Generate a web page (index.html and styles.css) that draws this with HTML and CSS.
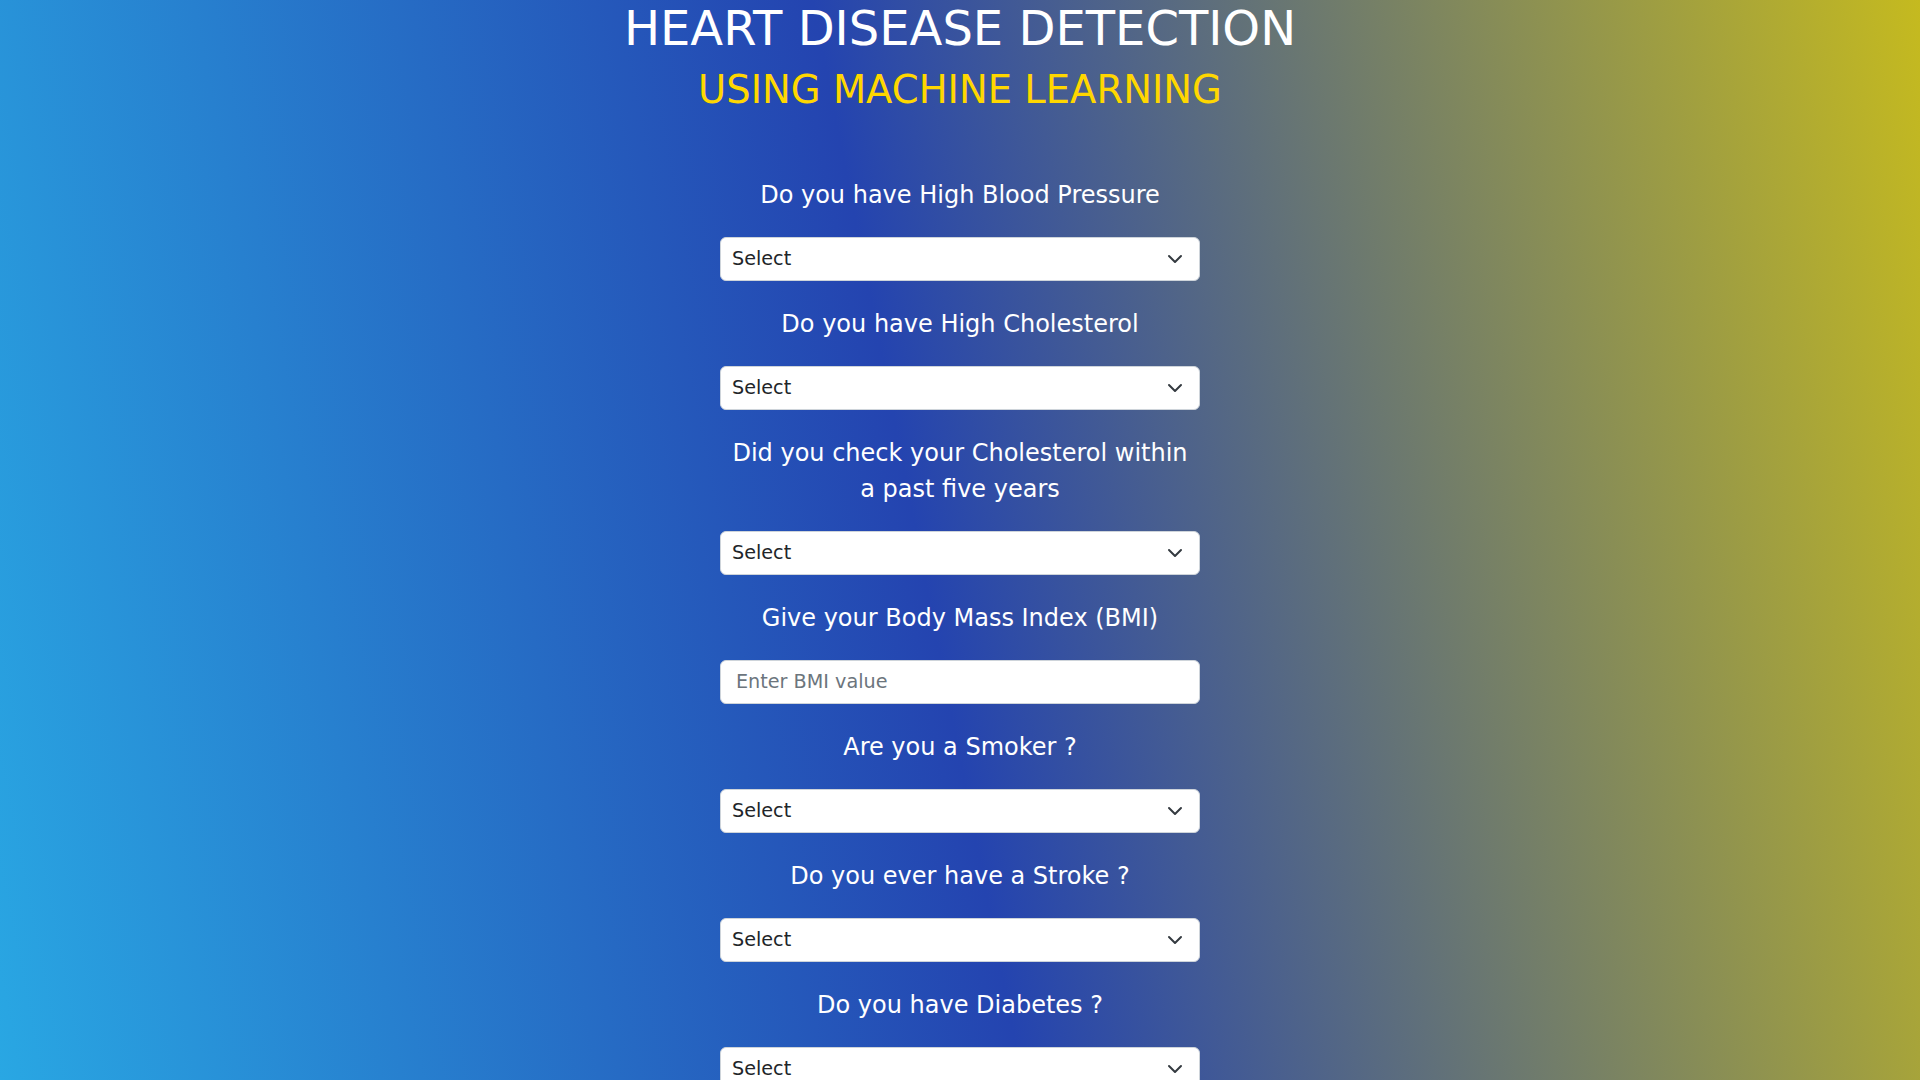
FILE: index.html
```html
<!DOCTYPE html>
<html lang="en">
<head>
<meta charset="utf-8">
<title>Heart Disease Detection</title>
<link rel="stylesheet" href="styles.css">
</head>
<body>
<main class="page">
  <header class="heading">
    <h1 class="title">HEART DISEASE DETECTION</h1>
    <h2 class="subtitle">USING MACHINE LEARNING</h2>
  </header>
  <form class="form">
    <div class="field">
      <label class="field-label" for="bp">Do you have High Blood Pressure</label>
      <select class="field-control field-select" id="bp"><option>Select</option><option>Yes</option><option>No</option></select>
    </div>
    <div class="field">
      <label class="field-label" for="chol">Do you have High Cholesterol</label>
      <select class="field-control field-select" id="chol"><option>Select</option><option>Yes</option><option>No</option></select>
    </div>
    <div class="field">
      <label class="field-label" for="cholcheck">Did you check your Cholesterol within a past five years</label>
      <select class="field-control field-select" id="cholcheck"><option>Select</option><option>Yes</option><option>No</option></select>
    </div>
    <div class="field">
      <label class="field-label" for="bmi">Give your Body Mass Index (BMI)</label>
      <input class="field-control field-input" id="bmi" type="text" placeholder="Enter BMI value">
    </div>
    <div class="field">
      <label class="field-label" for="smoker">Are you a Smoker ?</label>
      <select class="field-control field-select" id="smoker"><option>Select</option><option>Yes</option><option>No</option></select>
    </div>
    <div class="field">
      <label class="field-label" for="stroke">Do you ever have a Stroke ?</label>
      <select class="field-control field-select" id="stroke"><option>Select</option><option>Yes</option><option>No</option></select>
    </div>
    <div class="field">
      <label class="field-label" for="diabetes">Do you have Diabetes ?</label>
      <select class="field-control field-select" id="diabetes"><option>Select</option><option>Yes</option><option>No</option></select>
    </div>
  </form>
</main>
</body>
</html>
```
FILE: styles.css
```css
html, body {
  height: 100%;
  overflow: hidden;
}

body {
  margin: 0;
  font-family: "DejaVu Sans", "Liberation Sans", sans-serif;
  color: #fff;
  background: linear-gradient(79deg, #29a7e3 0%, #2444b0 48%, #c5ba1f 100%);
  background-attachment: fixed;
}

.page {
  display: flex;
  flex-direction: column;
  align-items: center;
}

.heading {
  text-align: center;
}

.title {
  margin: 0 0 9px;
  font-size: 48px;
  line-height: 1.2;
  font-weight: 400;
  color: #fff;
}

.subtitle {
  margin: 0;
  font-size: 38.5px;
  line-height: 1.2;
  font-weight: 400;
  color: #ffd700;
}

.form {
  width: 480px;
  margin-top: 64px;
}

.field {
  margin-bottom: 25px;
}

.field-label {
  display: block;
  margin-bottom: 24px;
  padding: 0 10px;
  font-size: 24px;
  line-height: 36px;
  text-align: center;
  color: #fff;
}

.field-control {
  display: block;
  box-sizing: border-box;
  width: 100%;
  height: 44px;
  margin: 0;
  border: 1px solid #ced4da;
  border-radius: 6px;
  background-color: #fff;
  font-family: "DejaVu Sans", "Liberation Sans", sans-serif;
  font-size: 19.2px;
  color: #212529;
  outline: none;
}

.field-select {
  padding: 0 40px 0 11px;
  appearance: none;
  -webkit-appearance: none;
  background-image: url("data:image/svg+xml,%3csvg xmlns='http://www.w3.org/2000/svg' viewBox='0 0 16 16'%3e%3cpath fill='none' stroke='%23343a40' stroke-linecap='round' stroke-linejoin='round' stroke-width='2' d='m2 5 6 6 6-6'/%3e%3c/svg%3e");
  background-repeat: no-repeat;
  background-position: right 16px center;
  background-size: 16px 16px;
}

.field-input {
  padding: 0 15px;
}

.field-input::placeholder {
  color: #6c757d;
  opacity: 1;
}
```
